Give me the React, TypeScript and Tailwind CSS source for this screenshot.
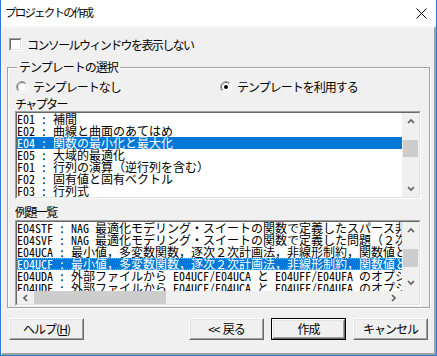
import React from 'react';

const chapters = [
  'E01 : 補間',
  'E02 : 曲線と曲面のあてはめ',
  'E04 : 関数の最小化と最大化',
  'E05 : 大域的最適化',
  'F01 : 行列の演算（逆行列を含む）',
  'F02 : 固有値と固有ベクトル',
  'F03 : 行列式',
];

const examples = [
  'E04STF : NAG 最適化モデリング・スイートの関数で定義したスパース非線形問題',
  'E04SVF : NAG 最適化モデリング・スイートの関数で定義した問題（２次錐計画）',
  'E04UCA : 最小値，多変数関数，逐次２次計画法，非線形制約，関数値と勾配',
  'E04UCF : 最小値，多変数関数，逐次２次計画法，非線形制約，関数値と勾配',
  'E04UDA : 外部ファイルから E04UCF/E04UCA と E04UFF/E04UFA のオプション',
  'E04UDF : 外部ファイルから E04UCF/E04UCA と E04UFF/E04UFA のオプション',
];

const listFont = "font-['Noto_Sans_Mono_CJK_JP','Noto_Sans_CJK_JP',monospace]";

function Arrow({ dir }: { dir: 'up' | 'down' | 'left' | 'right' }) {
  const d = {
    up: 'M1 5 L4 2 L7 5',
    down: 'M1 2 L4 5 L7 2',
    left: 'M5 1 L2 4 L5 7',
    right: 'M2 1 L5 4 L2 7',
  }[dir];
  const vertical = dir === 'up' || dir === 'down';
  return (
    <svg width={vertical ? 8 : 7} height={vertical ? 7 : 8} viewBox={vertical ? '0 0 8 7' : '0 0 7 8'}>
      <path d={d} fill="none" stroke="#606060" strokeWidth="1.7" />
    </svg>
  );
}

function VScroll({ thumbTop, thumbHeight }: { thumbTop: number; thumbHeight: number }) {
  return (
    <div className="w-[17px] bg-[#f0f0f0] flex flex-col shrink-0">
      <div className="h-[17px] flex items-center justify-center">
        <Arrow dir="up" />
      </div>
      <div className="flex-1 px-[1px]">
        <div className="bg-[#cdcdcd]" style={{ marginTop: thumbTop, height: thumbHeight }} />
      </div>
      <div className="h-[17px] flex items-center justify-center">
        <Arrow dir="down" />
      </div>
    </div>
  );
}

function Sunken({ className, children }: { className: string; children: React.ReactNode }) {
  return (
    <div className={`border border-t-[#a0a0a0] border-l-[#a0a0a0] border-b-white border-r-white ${className}`}>
      <div className="h-full border border-t-[#696969] border-l-[#696969] border-b-[#e3e3e3] border-r-[#e3e3e3] bg-white flex flex-col">
        {children}
      </div>
    </div>
  );
}

function Radio({ checked }: { checked?: boolean }) {
  return (
    <svg width="12" height="12" viewBox="0 0 12 12">
      <circle cx="6" cy="6" r="5.5" fill="#fff" />
      <path d="M2.1 9.9 A5.5 5.5 0 0 1 9.9 2.1" fill="none" stroke="#a0a0a0" />
      <path d="M2.8 9.2 A4.5 4.5 0 0 1 9.2 2.8" fill="none" stroke="#696969" />
      <path d="M9.9 2.1 A5.5 5.5 0 0 1 2.1 9.9" fill="none" stroke="#fff" />
      <path d="M9.2 2.8 A4.5 4.5 0 0 1 2.8 9.2" fill="none" stroke="#e3e3e3" />
      {checked && <circle cx="6" cy="6" r="2" fill="#000" />}
    </svg>
  );
}

function Button({ children, isDefault }: { children: React.ReactNode; isDefault?: boolean }) {
  return (
    <div className={`w-[75px] h-[22px] ${isDefault ? 'border border-[#000]' : ''}`}>
      <div className="h-full border border-t-white border-l-white border-b-[#696969] border-r-[#696969]">
        <div className="h-full border border-t-[#e3e3e3] border-l-[#e3e3e3] border-b-[#a0a0a0] border-r-[#a0a0a0] bg-[#f0f0f0] flex items-center justify-center text-[12px] tracking-[-1px] text-black whitespace-pre">
          {children}
        </div>
      </div>
    </div>
  );
}

function ListRow({ text, selected, focused }: { text: string; selected?: boolean; focused?: boolean }) {
  return (
    <div
      className={`h-[12px] overflow-hidden text-[12px] leading-[12px] whitespace-nowrap ${
        selected ? 'bg-[#0078d7] text-white' : ''
      } ${focused ? 'outline outline-1 outline-dotted outline-offset-[-1px] outline-[#f3a33a]' : ''}`}
    >
      {text}
    </div>
  );
}

export default function App() {
  return (
    <div className="w-[437px] h-[356px] border-x border-b border-[#2b7ad4] flex flex-col font-['Noto_Sans_CJK_JP',sans-serif] text-black select-none">
      <div className="h-[26px] bg-white flex items-center justify-between shrink-0">
        <span className="ml-[4px] text-[11.5px] tracking-[-1.8px]">プロジェクトの作成</span>
        <svg width="11" height="11" viewBox="0 0 11 11" className="mr-[9px]">
          <path d="M0.5 0.5 L10.5 10.5 M10.5 0.5 L0.5 10.5" stroke="#000" strokeWidth="1" />
        </svg>
      </div>
      <div className="flex-1 bg-[#f0f0f0] border-t-2 border-t-[#f7f7f7] border-l border-l-white border-r-2 border-r-[#a0a0a0] border-b-2 border-b-[#a0a0a0] flex flex-col">
        <div className="mt-[10px] ml-[7px] h-[13px] flex items-center gap-[5px]">
          <div className="w-[13px] h-[13px] border border-t-[#a0a0a0] border-l-[#a0a0a0] border-b-white border-r-white">
            <div className="h-full border border-t-[#696969] border-l-[#696969] border-b-[#e3e3e3] border-r-[#e3e3e3] bg-white" />
          </div>
          <span className="text-[12px] tracking-[-1.6px] leading-[13px]">コンソールウィンドウを表示しない</span>
        </div>

        <div className="relative mt-[16px] ml-[5px] w-[423px] h-[241px] border border-[#a0a0a0] shadow-[inset_1px_1px_0_#fff,1px_1px_0_#fff] pl-[7px] pr-[7px] flex flex-col">
          <span className="absolute left-[9px] top-[-8px] px-[2px] bg-[#f0f0f0] text-[12px] tracking-[-1px] leading-[14px]">
            テンプレートの選択
          </span>
          <div className="mt-[12px] h-[13px] flex items-center">
            <div className="flex items-center gap-[5px] ml-[1px] w-[204px]">
              <Radio />
              <span className="text-[12px] tracking-[-1px] leading-[13px]">テンプレートなし</span>
            </div>
            <div className="flex items-center gap-[5px]">
              <Radio checked />
              <span className="text-[12px] tracking-[-1px] leading-[13px]">テンプレートを利用する</span>
            </div>
          </div>
          <div className="mt-[3px] h-[15px] text-[12px] tracking-[-1.6px] leading-[15px]">チャプター</div>
          <Sunken className="w-[406px] h-[88px]">
            <div className="flex flex-1 min-h-0">
              <div className={`flex-1 overflow-hidden ${listFont}`}>
                {chapters.map((c, i) => (
                  <ListRow key={c} text={c} selected={i === 2} />
                ))}
              </div>
              <VScroll thumbTop={10} thumbHeight={17} />
            </div>
          </Sunken>
          <div className="mt-[5px] h-[16px] text-[12px] tracking-[-1.6px] leading-[16px]">例題一覧</div>
          <Sunken className="w-[406px] h-[86px]">
            <div className="flex flex-1 min-h-0">
              <div className={`flex-1 overflow-hidden ${listFont}`}>
                {examples.map((c, i) => (
                  <ListRow key={c} text={c} selected={i === 3} focused={i === 3} />
                ))}
              </div>
              <VScroll thumbTop={10} thumbHeight={18} />
            </div>
            <div className="h-[13px] flex shrink-0 bg-[#f0f0f0]">
              <div className="w-[17px] flex items-center justify-center">
                <Arrow dir="left" />
              </div>
              <div className="flex-1">
                <div className="w-[132px] h-full bg-[#cdcdcd]" />
              </div>
              <div className="w-[17px] flex items-center justify-center">
                <Arrow dir="right" />
              </div>
              <div className="w-[17px]" />
            </div>
          </Sunken>
        </div>

        <div className="mt-[10px] ml-[7px] flex">
          <Button>
            ヘルプ(<span className="underline">H</span>)
          </Button>
          <div className="ml-[105px] flex gap-[7px]">
            <Button>{'<<  戻る'}</Button>
            <Button isDefault>作成</Button>
            <Button>キャンセル</Button>
          </div>
        </div>
      </div>
    </div>
  );
}
